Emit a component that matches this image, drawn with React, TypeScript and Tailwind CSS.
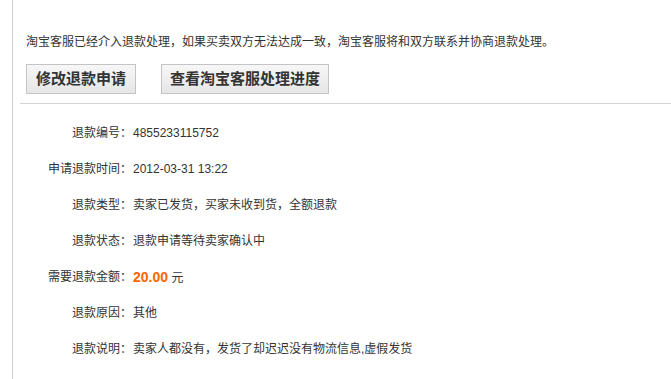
const rows: { label: string; value: React.ReactNode }[] = [
  { label: '退款编号：', value: '4855233115752' },
  { label: '申请退款时间：', value: '2012-03-31 13:22' },
  { label: '退款类型：', value: '卖家已发货，买家未收到货，全额退款' },
  { label: '退款状态：', value: '退款申请等待卖家确认中' },
  {
    label: '需要退款金额：',
    value: (
      <>
        <span className="text-[14px] font-bold text-[#f60]">20.00</span> 元
      </>
    ),
  },
  { label: '退款原因：', value: '其他' },
  { label: '退款说明：', value: '卖家人都没有，发货了却迟迟没有物流信息,虚假发货' },
];

export default function App() {
  return (
    <div
      className="min-h-[379px] bg-white pl-3 text-[12px] text-[#333]"
      style={{ fontFamily: '"Liberation Sans", "Noto Sans CJK SC", sans-serif' }}
    >
      <div className="min-h-[379px] border-l border-[#ccc] pl-[7px]">
        <div className="pl-[6px] pt-[33px]">
          <p className="leading-[18px]">
            淘宝客服已经介入退款处理，如果买卖双方无法达成一致，淘宝客服将和双方联系并协商退款处理。
          </p>
          <div className="mt-[13px] flex gap-[25px]">
            <button className="h-[30px] border border-[#c4c4c4] bg-gradient-to-b from-[#f7f7f7] to-[#e6e6e6] px-[9px] text-[15px] font-bold text-[#333]">
              修改退款申请
            </button>
            <button className="h-[30px] border border-[#c4c4c4] bg-gradient-to-b from-[#f7f7f7] to-[#e6e6e6] px-[8px] text-[15px] font-bold text-[#333]">
              查看淘宝客服处理进度
            </button>
          </div>
        </div>
        <div className="mt-[9px] border-t border-[#d4d4d4] pt-[11px]">
          {rows.map((r) => (
            <div key={r.label} className="flex h-[36px] items-center">
              <div className="w-[112px] text-right">{r.label}</div>
              <div className="pl-[1px]">{r.value}</div>
            </div>
          ))}
        </div>
      </div>
    </div>
  );
}
